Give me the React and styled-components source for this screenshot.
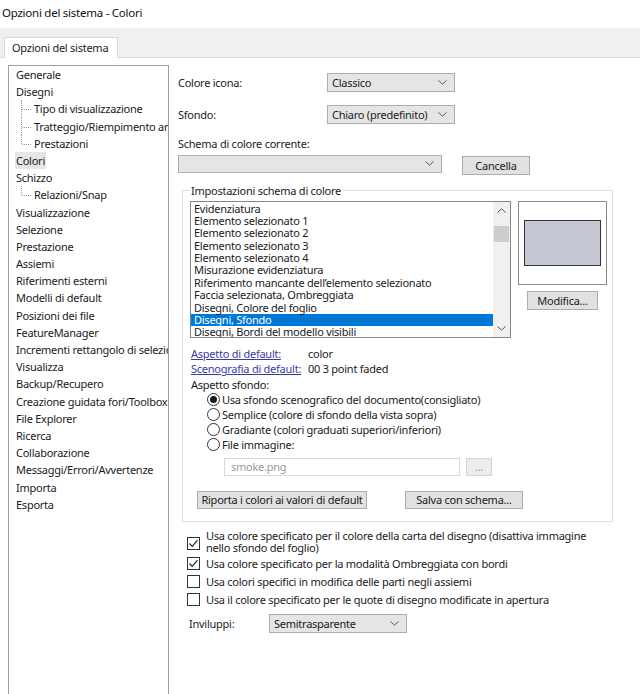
import React from 'react';
import styled, { createGlobalStyle } from 'styled-components';

const GlobalStyle = createGlobalStyle`
  html, body {
    margin: 0;
    padding: 0;
    background: #fff;
  }
  body {
    font-family: "Noto Sans", "Open Sans", sans-serif;
    font-size: 11px;
    letter-spacing: -0.25px;
    color: #1a1a1a;
  }
`;

const Window = styled.div`
  width: 640px;
  height: 694px;
  overflow: hidden;
  display: flex;
  flex-direction: column;
  background: #fff;
`;

const TitleBar = styled.div`
  height: 28px;
  line-height: 26px;
  padding-left: 2px;
  font-size: 11.5px;
  color: #111;
`;

const TabStrip = styled.div`
  height: 29px;
  display: flex;
  align-items: flex-end;
  padding-left: 4px;
  background: #f0f0f0;
  border-bottom: 1px solid #d9d9d9;
`;

const Tab = styled.div`
  height: 20px;
  line-height: 19px;
  padding: 0 9px 0 7px;
  margin-bottom: -1px;
  background: #fff;
  border: 1px solid #d9d9d9;
  border-bottom: none;
`;

const Body = styled.div`
  flex: 1;
  display: flex;
  padding: 7px 0 0 8px;
  min-height: 0;
`;

const Tree = styled.div`
  width: 161px;
  flex-shrink: 0;
  box-sizing: border-box;
  border: 1px solid #a0a0a0;
  border-bottom: none;
  padding-left: 6px;
  overflow: hidden;
  white-space: nowrap;
`;

const TreeItem = styled.div`
  position: relative;
  height: 17.2px;
  line-height: 17.2px;
  padding-left: ${(p) => (p.$child ? '18px' : '0')};

  ${(p) =>
    p.$child &&
    `
    &::before {
      content: "";
      position: absolute;
      left: 6px;
      top: 0;
      height: ${p.$last ? '9px' : '100%'};
      border-left: 1px dotted #9a9a9a;
    }
    &::after {
      content: "";
      position: absolute;
      left: 7px;
      top: 9px;
      width: 9px;
      border-top: 1px dotted #9a9a9a;
    }
  `}
`;

const TreeLabel = styled.span`
  padding: 1px 1px;
  background: ${(p) => (p.$selected ? '#e6e6e6' : 'transparent')};
`;

const Panel = styled.div`
  flex: 1;
  padding-left: 9px;
  display: flex;
  flex-direction: column;
`;

const FormRow = styled.div`
  display: flex;
  align-items: center;
  margin-top: ${(p) => p.$top || 0}px;
`;

const Label = styled.div`
  width: ${(p) => p.$w}px;
  padding-left: ${(p) => p.$indent || 0}px;
  box-sizing: border-box;
  flex-shrink: 0;
`;

const Combo = styled.div`
  box-sizing: border-box;
  width: ${(p) => p.$w}px;
  height: ${(p) => p.$h || 19}px;
  display: flex;
  align-items: center;
  justify-content: space-between;
  padding: 0 7px 0 4px;
  background: #e5e5e5;
  border: 1px solid #adadad;
  white-space: nowrap;
`;

const Button = styled.div`
  box-sizing: border-box;
  width: ${(p) => p.$w}px;
  height: ${(p) => p.$h || 19}px;
  margin-top: ${(p) => p.$top || 0}px;
  margin-left: ${(p) => p.$left || 0}px;
  display: flex;
  align-items: center;
  justify-content: center;
  white-space: nowrap;
  background: ${(p) => (p.$disabled ? '#ececec' : '#e1e1e1')};
  border: 1px solid ${(p) => (p.$disabled ? '#d4d4d4' : '#adadad')};
  color: ${(p) => (p.$disabled ? '#a0a0a0' : '#1a1a1a')};
`;

const SubLabel = styled.div`
  line-height: 15px;
  margin-top: 11.5px;
`;

const Group = styled.fieldset`
  margin: 9px 0 0 4px;
  width: 431px;
  box-sizing: border-box;
  min-inline-size: 0;
  padding: 3px 4px 12px 7px;
  border: 1px solid #dcdcdc;
`;

const Legend = styled.legend`
  padding: 0 1px;
  line-height: 14px;
`;

const TopArea = styled.div`
  display: flex;
  align-items: flex-start;
`;

const ListBox = styled.div`
  width: 321px;
  height: 137px;
  box-sizing: border-box;
  border: 1px solid #828790;
  display: flex;
  overflow: hidden;
`;

const ListRows = styled.div`
  flex: 1;
  padding-top: 1px;
  overflow: hidden;
  white-space: nowrap;
`;

const ListRow = styled.div`
  height: 12.4px;
  line-height: 12.4px;
  padding-left: 3px;
  background: ${(p) => (p.$selected ? '#0078d7' : 'transparent')};
  color: ${(p) => (p.$selected ? '#fff' : '#1a1a1a')};
`;

const ScrollBar = styled.div`
  width: 17px;
  background: #f0f0f0;
  display: flex;
  flex-direction: column;
  align-items: center;
`;

const ScrollArrow = styled.div`
  height: 17px;
  display: flex;
  align-items: center;
  justify-content: center;
`;

const ScrollThumb = styled.div`
  width: 15px;
  height: 16px;
  margin-top: 7px;
  background: #cdcdcd;
`;

const ScrollTrack = styled.div`
  flex: 1;
`;

const PreviewColumn = styled.div`
  margin-left: 7px;
  width: 89px;
  display: flex;
  flex-direction: column;
  align-items: center;
`;

const PreviewBox = styled.div`
  width: 89px;
  height: 84px;
  box-sizing: border-box;
  border: 1px solid #8a8a8a;
  display: flex;
  align-items: center;
  justify-content: center;
`;

const Swatch = styled.div`
  width: 77px;
  height: 46px;
  box-sizing: border-box;
  border: 1px solid #333;
  background: ${(p) => p.$color};
`;

const InfoRow = styled.div`
  display: flex;
  height: 15.4px;
  line-height: 15.4px;
  padding-left: 1px;
  white-space: nowrap;
  margin-top: ${(p) => p.$top || 0}px;
`;

const Link = styled.span`
  width: 117px;
  flex-shrink: 0;
  color: #3a3aa5;
  text-decoration: underline;
`;

const RadioRow = styled.div`
  display: flex;
  align-items: center;
  height: 15px;
  padding-left: 17px;
  gap: 2px;
`;

const RadioCircle = styled.span`
  width: 13px;
  height: 13px;
  box-sizing: border-box;
  border: 1px solid #333;
  border-radius: 50%;
  display: flex;
  align-items: center;
  justify-content: center;
  flex-shrink: 0;

  &::after {
    content: "";
    width: 7px;
    height: 7px;
    border-radius: 50%;
    background: ${(p) => (p.$checked ? '#1a1a1a' : 'transparent')};
  }
`;

const FileRow = styled.div`
  display: flex;
  margin-top: 5.5px;
  padding-left: 34px;
`;

const TextInput = styled.div`
  width: 236px;
  height: 18px;
  box-sizing: border-box;
  border: 1px solid #d9d9d9;
  padding-left: 6px;
  line-height: 16px;
  color: #9a9a9a;
`;

const ButtonRow = styled.div`
  display: flex;
  margin-top: 15px;
  padding-left: 7px;
`;

const CheckRow = styled.div`
  display: flex;
  align-items: center;
  gap: 6px;
  min-height: ${(p) => p.$h || 18}px;
  margin-top: ${(p) => p.$top || 0}px;
  padding-left: 9px;
  line-height: 12px;
`;

const CheckBox = styled.span`
  width: 13px;
  height: 13px;
  box-sizing: border-box;
  border: 1px solid #333;
  flex-shrink: 0;
  display: flex;
  align-items: center;
  justify-content: center;
  margin-top: ${(p) => p.$offset || 0}px;
`;

const Chevron = ({ up }) => (
  <svg width="9" height="5" viewBox="0 0 9 5">
    <path
      d={up ? 'M0.5 4.5 L4.5 0.8 L8.5 4.5' : 'M0.5 0.5 L4.5 4.2 L8.5 0.5'}
      fill="none"
      stroke="#555"
      strokeWidth="1"
    />
  </svg>
);

const Check = () => (
  <svg width="11" height="11" viewBox="0 0 11 11">
    <path d="M1.5 5.5 L4.2 8.3 L9.5 2.2" fill="none" stroke="#222" strokeWidth="1.2" />
  </svg>
);

const treeItems = [
  { label: 'Generale' },
  { label: 'Disegni' },
  { label: 'Tipo di visualizzazione', child: true },
  { label: 'Tratteggio/Riempimento area', child: true },
  { label: 'Prestazioni', child: true, last: true },
  { label: 'Colori', selected: true },
  { label: 'Schizzo' },
  { label: 'Relazioni/Snap', child: true, last: true },
  { label: 'Visualizzazione' },
  { label: 'Selezione' },
  { label: 'Prestazione' },
  { label: 'Assiemi' },
  { label: 'Riferimenti esterni' },
  { label: 'Modelli di default' },
  { label: 'Posizioni dei file' },
  { label: 'FeatureManager' },
  { label: 'Incrementi rettangolo di selezione' },
  { label: 'Visualizza' },
  { label: 'Backup/Recupero' },
  { label: 'Creazione guidata fori/Toolbox' },
  { label: 'File Explorer' },
  { label: 'Ricerca' },
  { label: 'Collaborazione' },
  { label: 'Messaggi/Errori/Avvertenze' },
  { label: 'Importa' },
  { label: 'Esporta' },
];

const schemeItems = [
  'Evidenziatura',
  'Elemento selezionato 1',
  'Elemento selezionato 2',
  'Elemento selezionato 3',
  'Elemento selezionato 4',
  'Misurazione evidenziatura',
  'Riferimento mancante dell\u2019elemento selezionato',
  'Faccia selezionata, Ombreggiata',
  'Disegni, Colore del foglio',
  'Disegni, Sfondo',
  'Disegni, Bordi del modello visibili',
];

const radios = [
  { label: 'Usa sfondo scenografico del documento(consigliato)', checked: true },
  { label: 'Semplice (colore di sfondo della vista sopra)' },
  { label: 'Gradiante (colori graduati superiori/inferiori)' },
  { label: 'File immagine:' },
];

export default function App() {
  return (
    <Window>
      <GlobalStyle />
      <TitleBar>Opzioni del sistema - Colori</TitleBar>
      <TabStrip>
        <Tab>Opzioni del sistema</Tab>
      </TabStrip>
      <Body>
        <Tree>
          {treeItems.map((it) => (
            <TreeItem key={it.label} $child={it.child} $last={it.last}>
              <TreeLabel $selected={it.selected}>{it.label}</TreeLabel>
            </TreeItem>
          ))}
        </Tree>

        <Panel>
          <FormRow $top={8}>
            <Label $w={149}>Colore icona:</Label>
            <Combo $w={128}>
              <span>Classico</span>
              <Chevron />
            </Combo>
          </FormRow>
          <FormRow $top={13}>
            <Label $w={149}>Sfondo:</Label>
            <Combo $w={128}>
              <span>Chiaro (predefinito)</span>
              <Chevron />
            </Combo>
          </FormRow>

          <SubLabel>Schema di colore corrente:</SubLabel>
          <FormRow $top={2}>
            <Combo $w={264} $h={18}>
              <span />
              <Chevron />
            </Combo>
            <Button $w={68} $left={20} $top={3}>Cancella</Button>
          </FormRow>

          <Group>
            <Legend>Impostazioni schema di colore</Legend>
            <TopArea>
              <ListBox>
                <ListRows>
                  {schemeItems.map((s) => (
                    <ListRow key={s} $selected={s === 'Disegni, Sfondo'}>
                      {s}
                    </ListRow>
                  ))}
                </ListRows>
                <ScrollBar>
                  <ScrollArrow>
                    <Chevron up />
                  </ScrollArrow>
                  <ScrollThumb />
                  <ScrollTrack />
                  <ScrollArrow>
                    <Chevron />
                  </ScrollArrow>
                </ScrollBar>
              </ListBox>
              <PreviewColumn>
                <PreviewBox>
                  <Swatch $color="#c5c8d3" />
                </PreviewBox>
                <Button $w={71} $top={6}>Modifica...</Button>
              </PreviewColumn>
            </TopArea>

            <InfoRow $top={8.5}>
              <Link>Aspetto di default:</Link>
              <span>color</span>
            </InfoRow>
            <InfoRow>
              <Link>Scenografia di default:</Link>
              <span>00 3 point faded</span>
            </InfoRow>
            <InfoRow>Aspetto sfondo:</InfoRow>

            {radios.map((r) => (
              <RadioRow key={r.label}>
                <RadioCircle $checked={r.checked} />
                <span>{r.label}</span>
              </RadioRow>
            ))}

            <FileRow>
              <TextInput>smoke.png</TextInput>
              <Button $w={26} $h={18} $left={6} $disabled>...</Button>
            </FileRow>

            <ButtonRow>
              <Button $w={170} $h={18}>Riporta i colori ai valori di default</Button>
              <Button $w={118} $h={18} $left={38}>Salva con schema...</Button>
            </ButtonRow>
          </Group>

          <CheckRow $h={25} $top={8}>
            <CheckBox $offset={3}>
              <Check />
            </CheckBox>
            <span>
              Usa colore specificato per il colore della carta del disegno (disattiva immagine
              <br />
              nello sfondo del foglio)
            </span>
          </CheckRow>
          <CheckRow>
            <CheckBox>
              <Check />
            </CheckBox>
            <span>Usa colore specificato per la modalità Ombreggiata con bordi</span>
          </CheckRow>
          <CheckRow>
            <CheckBox />
            <span>Usa colori specifici in modifica delle parti negli assiemi</span>
          </CheckRow>
          <CheckRow>
            <CheckBox />
            <span>Usa il colore specificato per le quote di disegno modificate in apertura</span>
          </CheckRow>

          <FormRow $top={5}>
            <Label $w={91} $indent={11}>Inviluppi:</Label>
            <Combo $w={138}>
              <span>Semitrasparente</span>
              <Chevron />
            </Combo>
          </FormRow>
        </Panel>
      </Body>
    </Window>
  );
}
